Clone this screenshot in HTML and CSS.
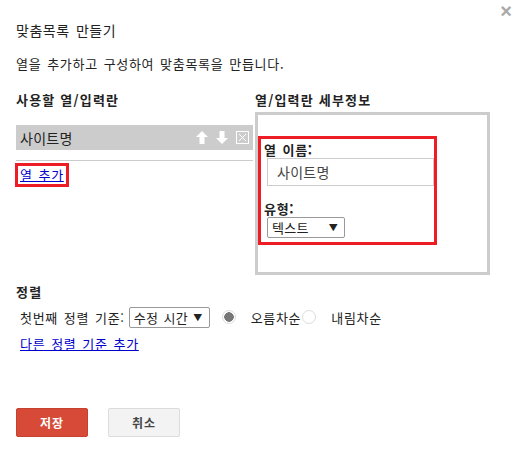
FILE: index.html
```html
<!DOCTYPE html>
<html lang="ko">

<head>
   <meta charset="UTF-8">
   <meta name="viewport" content="width=device-width, initial-scale=1.0">
   <title>맞춤목록 만들기</title>
   <link rel="stylesheet" href="styles.css">
</head>

<body>
   <div class="dialog">
       <button class="close-btn">&times;</button>
       <h2 class="title">맞춤목록 만들기</h2>
       <p class="desc">열을 추가하고 구성하여 맞춤목록을 만듭니다.</p>

       <div class="columns">
           <div class="col-left">
               <h3 class="heading">사용할 열/입력란</h3>
               <div class="field-row">
                   <span>사이트명</span>
                   <span class="row-icons">
                       <svg width="12" height="13" viewBox="0 0 12 13"><path d="M6 0 L12 6 H8.5 V13 H3.5 V6 H0 Z" fill="#fff"/></svg>
                       <svg width="12" height="13" viewBox="0 0 12 13"><path d="M6 13 L12 7 H8.5 V0 H3.5 V7 H0 Z" fill="#fff"/></svg>
                       <svg width="13" height="13" viewBox="0 0 13 13"><rect x="0.5" y="0.5" width="12" height="12" fill="none" stroke="#fff"/><path d="M3 3 L10 10 M10 3 L3 10" stroke="#fff" stroke-width="1"/></svg>
                   </span>
               </div>
               <div class="row-line"></div>
               <a href="#" class="add-link boxed">열 추가</a>
           </div>

           <div class="col-right">
               <h3 class="heading">열/입력란 세부정보</h3>
               <div class="detail-panel">
                   <div class="detail-box">
                       <label class="detail-label">열 이름:</label>
                       <div class="name-input">사이트명</div>
                       <label class="detail-label type-label">유형:</label>
                       <div class="select type-select"><span>텍스트</span><span class="arrow">▼</span></div>
                   </div>
               </div>
           </div>
       </div>

       <h3 class="heading sort-heading">정렬</h3>
       <div class="sort-row">
           <span>첫번째 정렬 기준:</span>
           <div class="select sort-select"><span>수정 시간</span><span class="arrow">▼</span></div>
           <span class="radio checked"></span>
           <span class="radio-text">오름차순</span>
           <span class="radio"></span>
           <span class="radio-text">내림차순</span>
       </div>
       <a href="#" class="add-link sort-link">다른 정렬 기준 추가</a>

       <div class="buttons">
           <button class="btn btn-save">저장</button>
           <button class="btn btn-cancel">취소</button>
       </div>
   </div>
</body>

</html>
```

FILE: styles.css
```css
body {
    margin: 0;
    font-family: "Noto Sans CJK KR", "Noto Sans", sans-serif;
    font-size: 13px;
    color: #222;
    background: #fff;
    letter-spacing: 0.7px;
    word-spacing: 1.5px;
}

.dialog {
    position: relative;
    width: 518px;
    height: 450px;
    padding: 18px 16px 0 16px;
    box-sizing: border-box;
}

.close-btn {
    position: absolute;
    top: 0;
    right: 6px;
    background: none;
    border: none;
    color: #aaa;
    font-size: 20px;
    font-weight: bold;
    padding: 0;
    cursor: pointer;
}

.title {
    margin: 0;
    font-size: 14px;
    font-weight: normal;
    line-height: 24px;
    letter-spacing: 0.5px;
    word-spacing: 2px;
}

.desc {
    margin: 12px 0 0 0;
    line-height: 20px;
}

.columns {
    display: flex;
    margin-top: 16px;
}

.heading {
    margin: 0;
    font-size: 13px;
    font-weight: bold;
    line-height: 20px;
    letter-spacing: 1.2px;
    word-spacing: 0;
}

.col-left {
    width: 239px;
}

.col-left .heading {
    margin-bottom: 15px;
}

.field-row {
    display: flex;
    justify-content: space-between;
    align-items: center;
    width: 237px;
    height: 25px;
    padding: 0 4px;
    box-sizing: border-box;
    background-color: #cccccc;
    font-size: 14px;
    letter-spacing: 0.3px;
}

.row-icons {
    display: flex;
    gap: 8px;
    align-items: center;
}

.row-line {
    width: 237px;
    height: 1px;
    background-color: #cccccc;
    margin-top: 10px;
}

.add-link {
    color: #0000cc;
    text-decoration: underline;
}

.boxed {
    display: inline-block;
    margin: 2px 0 0 -1px;
    border: 3px solid #ee1c25;
    padding: 0 2px;
    line-height: 18px;
}

.col-right .heading {
    margin-bottom: 2px;
}

.detail-panel {
    width: 235px;
    height: 163px;
    border: 3px solid #cccccc;
    box-sizing: border-box;
    padding-top: 21px;
}

.detail-box {
    width: 179px;
    height: 109px;
    border: 3px solid #ee1c25;
    box-sizing: border-box;
    padding: 2px 3px 0 3px;
}

.detail-label {
    display: block;
    font-weight: bold;
    line-height: 17px;
}

.name-input {
    margin: 0 0 0 3px;
    width: 167px;
    height: 28px;
    border: 1px solid #cccccc;
    box-sizing: border-box;
    padding-left: 9px;
    line-height: 26px;
    color: #444;
    font-size: 14px;
    letter-spacing: 0.3px;
}

.type-label {
    margin-top: 14px;
}

.select {
    display: flex;
    justify-content: space-between;
    align-items: center;
    border: 1px solid #999;
    border-radius: 2px;
    box-sizing: border-box;
    padding: 0 6px 0 4px;
    background: #fff;
    letter-spacing: 0.3px;
}

.arrow {
    font-size: 9px;
}

.type-select {
    margin-left: 3px;
    width: 78px;
    height: 21px;
}

.sort-heading {
    margin-top: 7px;
}

.sort-row {
    display: flex;
    align-items: center;
    margin: 4px 0 0 4px;
    height: 22px;
}

.sort-select {
    margin-left: 4px;
    width: 81px;
    height: 21px;
}

.radio {
    width: 14px;
    height: 14px;
    border: 1px solid #ddd;
    border-radius: 50%;
    box-sizing: border-box;
    background: #fff;
}

.radio.checked {
    margin-left: 12px;
    background: radial-gradient(circle, #777 0 4.5px, #fff 5px);
}

.radio-text {
    margin-left: 15px;
}

.radio-text + .radio {
    margin-left: 1px;
}

.sort-link {
    display: inline-block;
    margin: 6px 0 0 4px;
}

.buttons {
    display: flex;
    gap: 20px;
    margin-top: 55px;
}

.btn {
    width: 72px;
    height: 29px;
    border-radius: 2px;
    font-family: inherit;
    font-size: 12px;
    font-weight: bold;
    letter-spacing: 1px;
}

.btn-save {
    background-color: #d84a38;
    border: 1px solid #c6412f;
    color: #fff;
}

.btn-cancel {
    background-color: #f3f3f3;
    border: 1px solid #dcdcdc;
    color: #444;
}
```
